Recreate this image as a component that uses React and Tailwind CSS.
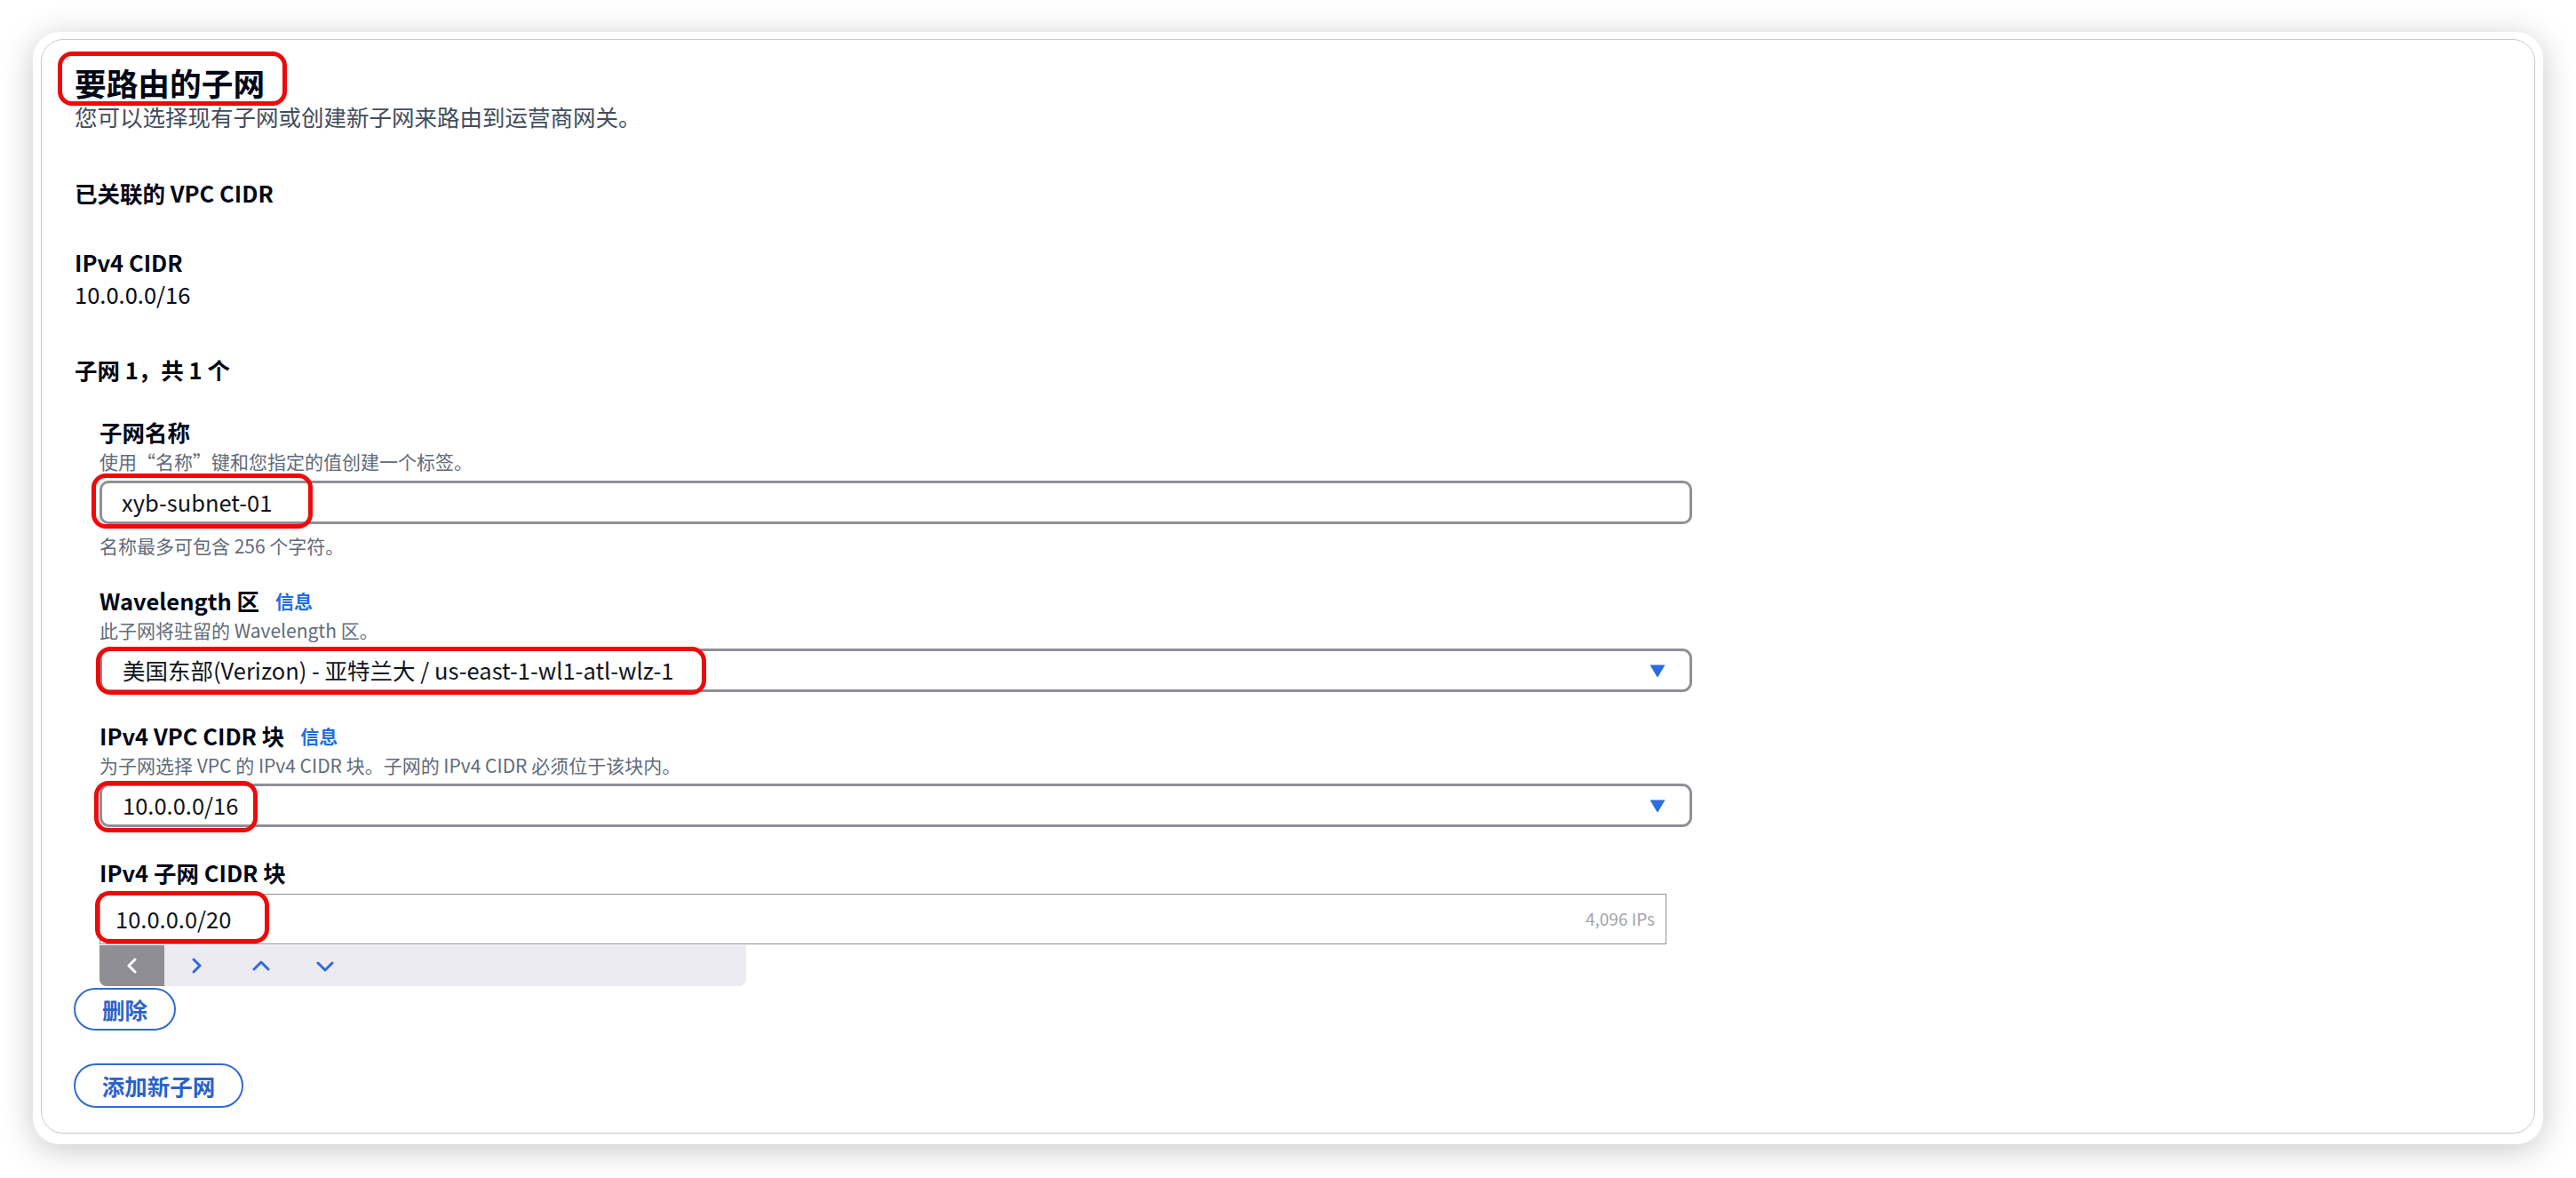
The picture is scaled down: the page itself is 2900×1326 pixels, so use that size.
import React from 'react'

const font = { fontFamily: '"Noto Sans CJK SC", "Noto Sans", sans-serif' }

function RedMark({ className }) {
  return (
    <div
      className={`pointer-events-none absolute rounded-[16px] border-[5px] border-[#ee0a0a] ${className}`}
    />
  )
}

function ArrowDown() {
  return (
    <svg width="20" height="16" viewBox="0 0 20 16">
      <path d="M1.5 1.5 H18.5 L10.8 14.6 Q10 15.8 9.2 14.6 Z" fill="#2b6de0" />
    </svg>
  )
}

function Chevron({ dir, color }) {
  const paths = {
    left: 'M11 2 L4 9 L11 16',
    right: 'M4 2 L11 9 L4 16',
    up: 'M2 12 L10 4 L18 12',
    down: 'M2 5 L10 13 L18 5',
  }
  const horiz = dir === 'left' || dir === 'right'
  return (
    <svg width={horiz ? 15 : 20} height={horiz ? 18 : 17} viewBox={horiz ? '0 0 15 18' : '0 0 20 17'}>
      <path d={paths[dir]} fill="none" stroke={color} strokeWidth="3" strokeLinecap="round" strokeLinejoin="round" />
    </svg>
  )
}

function Label({ children, info }) {
  return (
    <div className="flex h-[36px] items-center text-[25.5px] font-bold leading-[36px] text-[#000716]">
      <span>{children}</span>
      {info && <span className="ml-[18px] text-[21px] font-bold text-[#1f6fdc]">信息</span>}
    </div>
  )
}

function Desc({ children }) {
  return <div className="h-[30px] text-[21px] leading-[30px] text-[#5f6b7a]">{children}</div>
}

function Select({ value }) {
  return (
    <div className="flex h-[49px] w-[1793px] items-center justify-between rounded-[11px] border-[3px] border-[#8f8f97] bg-white pl-[23px] pr-[26px]">
      <span className="text-[25.5px] text-[#0f141a]">{value}</span>
      <ArrowDown />
    </div>
  )
}

export default function App() {
  return (
    <div className="h-[1326px] w-[2900px] overflow-hidden bg-white pl-[37px] pt-[36px]" style={font}>
      <div className="h-[1252px] w-[2826px] rounded-[30px] bg-white pb-[12px] pl-[9px] pr-[9px] pt-[8px] shadow-[0_6px_36px_rgba(0,0,0,0.22)]">
        <div className="h-[1232px] w-[2808px] rounded-[25px] border border-[#c9c9ce] bg-white pl-[37px] pt-[27px]">
          {/* heading */}
          <div className="relative h-[42px] w-fit text-[35.7px] font-bold leading-[42px] text-[#000716]">
            要路由的子网
            <RedMark className="left-[-19px] top-[-14px] h-[61px] w-[258px]" />
          </div>
          <div className="h-[34px] text-[25.5px] leading-[34px] text-[#414d5c]">
            您可以选择现有子网或创建新子网来路由到运营商网关。
          </div>

          <div className="mt-[52px] h-[34px] text-[25.5px] font-bold leading-[34px] text-[#000716]">
            已关联的 VPC CIDR
          </div>
          <div className="mt-[43px] h-[36px] text-[25.5px] font-bold leading-[36px] text-[#000716]">IPv4 CIDR</div>
          <div className="h-[36px] text-[25.5px] leading-[36px] text-[#000716]">10.0.0.0/16</div>

          <div className="mt-[50px] h-[34px] text-[25.5px] font-bold leading-[34px] text-[#000716]">
            子网 1，共 1 个
          </div>

          {/* subnet fields */}
          <div className="ml-[28px] mt-[35px]">
            <Label>子网名称</Label>
            <Desc>使用“名称”键和您指定的值创建一个标签。</Desc>
            <div className="relative mt-[7px]">
              <div className="flex h-[49px] w-[1793px] items-center rounded-[10px] border-[3px] border-[#8f8f97] bg-white pl-[22px] text-[25.5px] text-[#0f141a]">
                xyb-subnet-01
              </div>
              <RedMark className="left-[-9px] top-[-8px] h-[62px] w-[249px]" />
            </div>
            <div className="mt-[9px]">
              <Desc>名称最多可包含 256 个字符。</Desc>
            </div>

            <div className="mt-[29px]">
              <Label info>Wavelength 区</Label>
            </div>
            <Desc>此子网将驻留的 Wavelength 区。</Desc>
            <div className="relative mt-[6px]">
              <Select value="美国东部(Verizon) - 亚特兰大 / us-east-1-wl1-atl-wlz-1" />
              <RedMark className="left-[-4px] top-[-2px] h-[54px] w-[687px]" />
            </div>

            <div className="mt-[31px]">
              <Label info>IPv4 VPC CIDR 块</Label>
            </div>
            <Desc>为子网选择 VPC 的 IPv4 CIDR 块。子网的 IPv4 CIDR 必须位于该块内。</Desc>
            <div className="relative mt-[6px]">
              <Select value="10.0.0.0/16" />
              <RedMark className="left-[-6px] top-[-3px] h-[58px] w-[184px]" />
            </div>

            <div className="mt-[33px]">
              <Label>IPv4 子网 CIDR 块</Label>
            </div>
            <div className="relative mt-[6px]">
              <div className="flex h-[57px] w-[1764px] items-center justify-between border border-[#8f8f97] bg-white pl-[17px] pr-[12px]">
                <span className="text-[25.5px] text-[#0f141a]">10.0.0.0/20</span>
                <span className="text-[19px] text-[#a4a4ab]">4,096 IPs</span>
              </div>
              <RedMark className="left-[-5px] top-[-3px] h-[59px] w-[196px]" />
            </div>
            {/* keyboard accessory bar */}
            <div className="mt-[1px] flex h-[46px] w-[728px] items-center rounded-b-[8px] bg-[#ebebf1]">
              <div className="flex h-full w-[73px] items-center justify-center rounded-bl-[8px] bg-[#8e8e94]">
                <Chevron dir="left" color="#ffffff" />
              </div>
              <div className="flex w-[73px] items-center justify-center">
                <Chevron dir="right" color="#2f6bd6" />
              </div>
              <div className="flex w-[72px] items-center justify-center">
                <Chevron dir="up" color="#2f6bd6" />
              </div>
              <div className="flex w-[72px] items-center justify-center">
                <Chevron dir="down" color="#2f6bd6" />
              </div>
            </div>
          </div>

          <div className="ml-[-1px] mt-[2px] flex h-[48px] w-[115px] items-center justify-center rounded-full border-[2.5px] border-[#2f6bd3] text-[25.5px] font-bold text-[#2a63c9]">
            删除
          </div>
          <div className="ml-[-1px] mt-[37px] flex h-[50px] w-[191px] items-center justify-center rounded-full border-[2.5px] border-[#2f6bd3] text-[25.5px] font-bold text-[#2a63c9]">
            添加新子网
          </div>
        </div>
      </div>
    </div>
  )
}
